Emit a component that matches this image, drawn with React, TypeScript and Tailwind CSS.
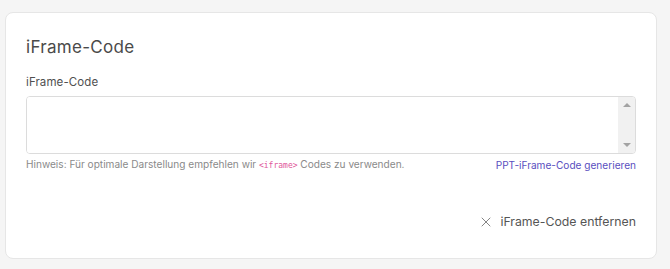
import { X } from "lucide-react";

export default function App() {
  return (
    <div className="min-h-[269px] w-[670px] bg-[#f5f5f5] pt-[12px] pl-[5px] font-['Inter',sans-serif]">
      <div className="w-[652px] h-[247px] rounded-[8px] border border-[#e6e6e6] bg-white px-[20px] pt-[23px]">
        <h2 className="text-[17px] leading-[22px] text-[#4a4a4a] tracking-[0.3px]">iFrame-Code</h2>

        <label className="mt-[16px] block text-[11.5px] leading-[16px] tracking-[0.1px] text-[#505050]">iFrame-Code</label>
        <div className="mt-[6px] flex h-[58px] w-full overflow-hidden rounded-[4px] border border-[#dcdcdc] bg-white">
          <textarea className="h-full flex-1 resize-none bg-white px-2 py-1 text-[12px] text-[#333] focus:outline-none" />
          <div className="flex w-[17px] flex-col items-center justify-between bg-[#f1f1f1] py-[6px]">
            <span className="h-0 w-0 border-x-[4px] border-b-[4px] border-x-transparent border-b-[#a3a3a3]" />
            <span className="h-0 w-0 border-x-[4px] border-t-[4px] border-x-transparent border-t-[#a3a3a3]" />
          </div>
        </div>

        <div className="mt-[2px] flex items-center justify-between text-[10.1px] leading-[16px]">
          <p className="text-[#8a8a8a]">
            Hinweis: Für optimale Darstellung empfehlen wir{" "}
            <code className="font-['DejaVu_Sans_Mono',monospace] text-[8px] text-[#e0559a]">&lt;iframe&gt;</code>{" "}
            Codes zu verwenden.
          </p>
          <a href="#" className="text-[#5a4fc0]">PPT-iFrame-Code generieren</a>
        </div>

        <div className="mt-[39px] flex justify-end">
          <button className="flex items-center gap-[6px] text-[12.3px] leading-[18px] text-[#555]">
            <X className="h-[16px] w-[16px] text-[#666]" strokeWidth={1.2} />
            iFrame-Code entfernen
          </button>
        </div>
      </div>
    </div>
  );
}
